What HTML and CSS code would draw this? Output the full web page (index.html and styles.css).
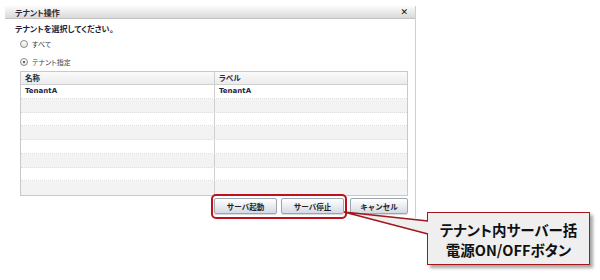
FILE: index.html
```html
<!DOCTYPE html>
<html>
<head>
  <meta charset="utf-8">
  <title>テナント操作</title>
  <link rel="stylesheet" href="styles.css">
</head>
<body>
  <div class="dialog">
    <div class="title-bar">
      <span class="title">テナント操作</span>
      <span class="close">✕</span>
    </div>
    <div class="content">
      <div class="prompt">テナントを選択してください。</div>
      <label class="radio-row"><span class="radio"></span>すべて</label>
      <label class="radio-row"><span class="radio checked"></span>テナント指定</label>

      <div class="grid">
        <div class="grid-row grid-head">
          <div class="cell">名称</div>
          <div class="cell">ラベル</div>
        </div>
        <div class="grid-row"><div class="cell">TenantA</div><div class="cell">TenantA</div></div>
        <div class="grid-row alt"><div class="cell"></div><div class="cell"></div></div>
        <div class="grid-row"><div class="cell"></div><div class="cell"></div></div>
        <div class="grid-row alt"><div class="cell"></div><div class="cell"></div></div>
        <div class="grid-row"><div class="cell"></div><div class="cell"></div></div>
        <div class="grid-row alt"><div class="cell"></div><div class="cell"></div></div>
        <div class="grid-row"><div class="cell"></div><div class="cell"></div></div>
        <div class="grid-row alt last"><div class="cell"></div><div class="cell"></div></div>
      </div>

      <div class="btn-row">
        <span class="highlight">
          <button class="btn">サーバ起動</button>
          <button class="btn">サーバ停止</button>
        </span>
        <button class="btn btn-cancel">キャンセル</button>
      </div>
    </div>
  </div>

  <!-- annotation callout -->
  <svg class="callout-tail" width="94" height="40" viewBox="0 0 94 40">
    <polygon points="4,7 88,16 92,16 92,29 88,29" fill="#efefef"/>
    <polyline points="88,16 4,7 88,29" fill="none" stroke="#a3161c" stroke-width="1.6" stroke-linejoin="miter"/>
  </svg>
  <div class="callout">
    テナント内サーバー括<br>電源ON/OFFボタン
  </div>
</body>
</html>
```

FILE: styles.css
```css
body {
  margin: 0;
  width: 600px;
  height: 280px;
  background: #ffffff;
  font-family: "DejaVu Sans", "Noto Sans CJK JP", sans-serif;
  font-feature-settings: "palt";
  color: #1e1e2e;
  position: relative;
  overflow: hidden;
}

.dialog {
  margin: 6px 0 0 5px;
  width: 410px;
  height: 212px;
  border-right: 1px solid #cfcfcf;
}

.title-bar {
  height: 12px;
  display: flex;
  align-items: center;
  justify-content: space-between;
  padding: 0 7px 0 10px;
  background: linear-gradient(#fbfbfb, #d9d9d9);
  border-bottom: 1px solid #c4c4c4;
}

.title {
  font-family: "Noto Sans CJK JP", sans-serif;
  font-size: 8px;
  font-weight: bold;
  color: #2a2a3a;
}

.close {
  font-size: 9px;
  font-weight: bold;
  color: #111;
}

.content {
  padding: 0 7px 0 10px;
}

.prompt {
  margin-top: 5px;
  line-height: 10px;
  height: 10px;
  font-family: "Noto Sans CJK JP", sans-serif;
  font-size: 8px;
  font-weight: bold;
  color: #1e1e3a;
}

.radio-row {
  display: flex;
  align-items: center;
  gap: 4px;
  height: 18px;
  padding-left: 5px;
  font-family: "Noto Sans CJK JP", sans-serif;
  font-size: 7px;
  color: #444;
}

.radio-row:first-of-type {
  margin-top: 1px;
}

.radio {
  width: 6px;
  height: 6px;
  border: 1px solid #8c8c8c;
  border-radius: 50%;
  background: linear-gradient(#ffffff, #e4e4e4);
  display: flex;
  align-items: center;
  justify-content: center;
}

.radio.checked::after {
  content: "";
  width: 2px;
  height: 2px;
  border-radius: 50%;
  background: #333;
}

.grid {
  margin: 0 0 0 5px;
  border: 1px solid #c9c9c9;
}

.grid-row {
  display: grid;
  grid-template-columns: 193px 1fr;
  height: 13.75px;
  box-sizing: border-box;
  border-bottom: 1px dotted #dedede;
}

.grid-row.last {
  border-bottom: none;
}

.grid-row.alt {
  background: #f3f3f3;
}

.grid-head {
  height: 13px;
  background: linear-gradient(#fafafa, #ececec);
  border-bottom: 1px solid #cfcfcf;
}

.cell {
  padding-left: 4px;
  font-size: 7px;
  font-weight: bold;
  line-height: 12px;
  color: #24244a;
}

.cell + .cell {
  border-left: 1px solid #cfcfcf;
}

.grid-head .cell {
  font-family: "Noto Sans CJK JP", sans-serif;
  font-size: 7.5px;
  color: #2a2a3a;
}

.btn-row {
  display: flex;
  justify-content: flex-end;
  align-items: center;
  gap: 3px;
  margin-top: 2px;
}

.highlight {
  display: flex;
  gap: 4px;
  padding: 2px 1px 3px;
  margin: -4px 0 -5px;
  border: 2px solid #c0101c;
  border-radius: 5px;
}

.btn {
  width: 63px;
  height: 16px;
  padding: 0;
  border: 1px solid #9ea5b0;
  border-radius: 2px;
  background: linear-gradient(#ffffff, #d5dbe4);
  font-family: "Noto Sans CJK JP", sans-serif;
  font-size: 7.5px;
  font-weight: bold;
  color: #222;
  box-shadow: 0 1px 1px rgba(0, 0, 0, 0.15);
}

.btn-cancel {
  width: 58px;
}

.callout {
  position: absolute;
  left: 427px;
  top: 212px;
  width: 161px;
  background: #efefef;
  border: 1.5px solid #a3161c;
  box-shadow: 3px 3px 3px rgba(0, 0, 0, 0.35);
  font-family: "Noto Sans CJK JP", sans-serif;
  font-size: 14.5px;
  font-weight: bold;
  line-height: 20px;
  text-align: center;
  padding-top: 7px;
  height: 44px;
  color: #111;
}

.callout-tail {
  position: absolute;
  left: 340px;
  top: 205px;
  z-index: 1;
}
```
